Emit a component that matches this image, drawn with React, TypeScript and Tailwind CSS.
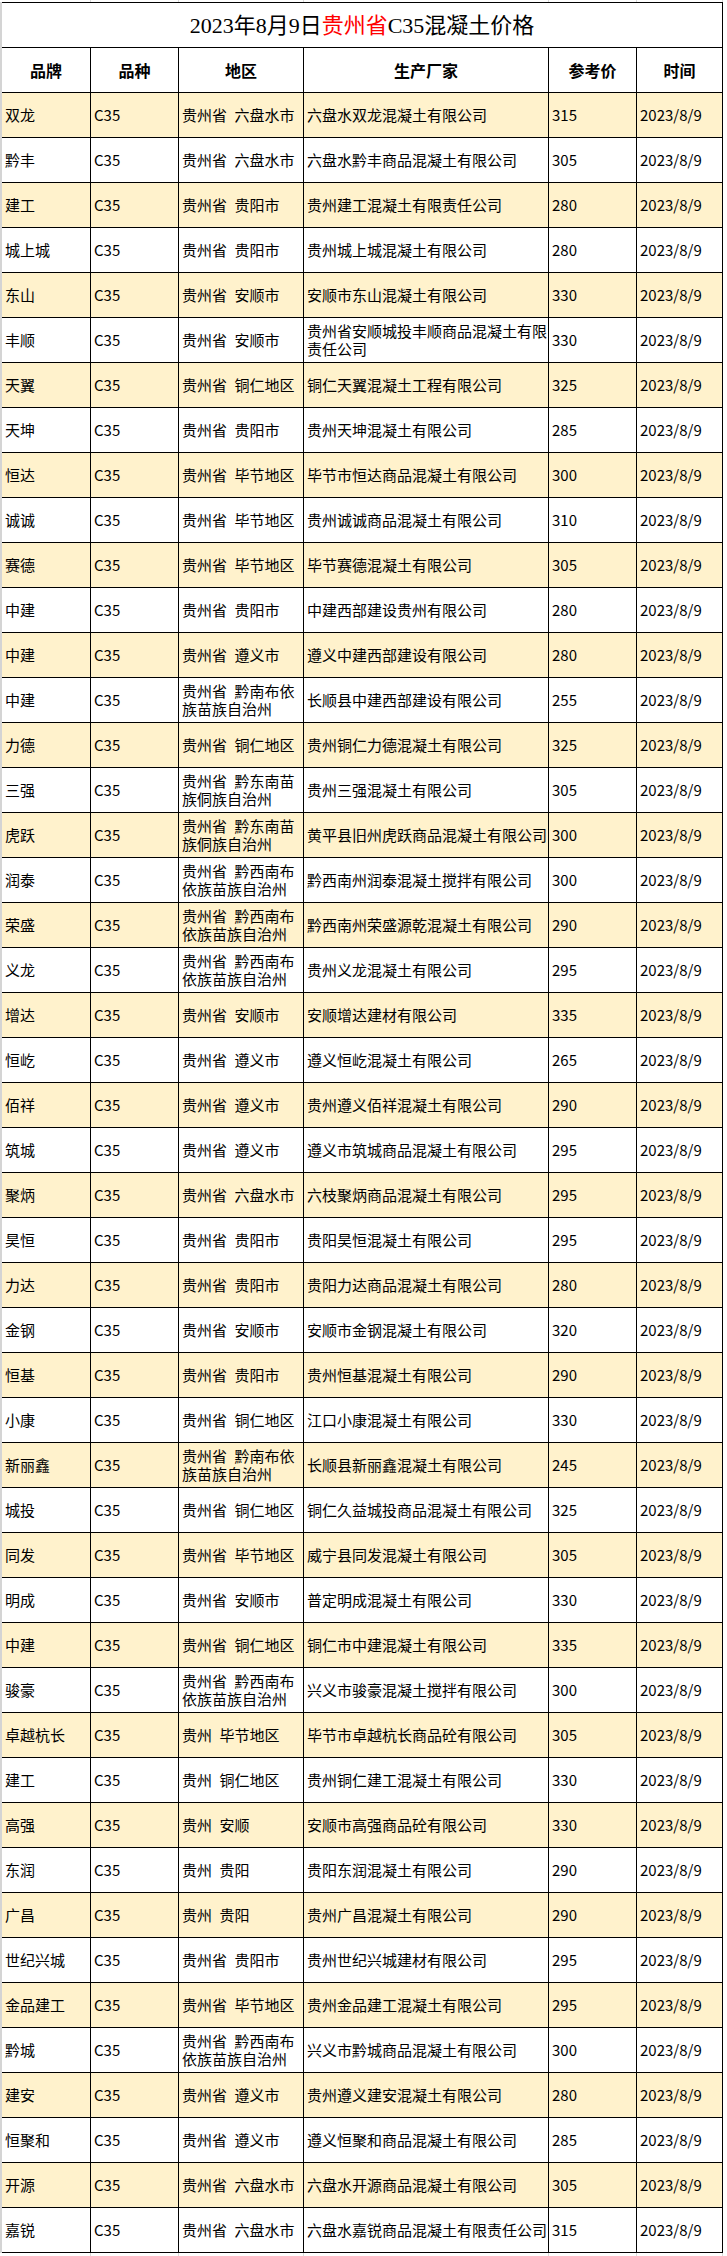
import React from "react";

type Fila = {
  marca: string;
  region: string[];
  fabrica: string[];
  precio: number;
};

// 区域/厂家里的换行按截图手动拆分
const filas: Fila[] = [
  { marca: "双龙", region: ["贵州省 六盘水市"], fabrica: ["六盘水双龙混凝土有限公司"], precio: 315 },
  { marca: "黔丰", region: ["贵州省 六盘水市"], fabrica: ["六盘水黔丰商品混凝土有限公司"], precio: 305 },
  { marca: "建工", region: ["贵州省 贵阳市"], fabrica: ["贵州建工混凝土有限责任公司"], precio: 280 },
  { marca: "城上城", region: ["贵州省 贵阳市"], fabrica: ["贵州城上城混凝土有限公司"], precio: 280 },
  { marca: "东山", region: ["贵州省 安顺市"], fabrica: ["安顺市东山混凝土有限公司"], precio: 330 },
  { marca: "丰顺", region: ["贵州省 安顺市"], fabrica: ["贵州省安顺城投丰顺商品混凝土有限", "责任公司"], precio: 330 },
  { marca: "天翼", region: ["贵州省 铜仁地区"], fabrica: ["铜仁天翼混凝土工程有限公司"], precio: 325 },
  { marca: "天坤", region: ["贵州省 贵阳市"], fabrica: ["贵州天坤混凝土有限公司"], precio: 285 },
  { marca: "恒达", region: ["贵州省 毕节地区"], fabrica: ["毕节市恒达商品混凝土有限公司"], precio: 300 },
  { marca: "诚诚", region: ["贵州省 毕节地区"], fabrica: ["贵州诚诚商品混凝土有限公司"], precio: 310 },
  { marca: "赛德", region: ["贵州省 毕节地区"], fabrica: ["毕节赛德混凝土有限公司"], precio: 305 },
  { marca: "中建", region: ["贵州省 贵阳市"], fabrica: ["中建西部建设贵州有限公司"], precio: 280 },
  { marca: "中建", region: ["贵州省 遵义市"], fabrica: ["遵义中建西部建设有限公司"], precio: 280 },
  { marca: "中建", region: ["贵州省 黔南布依", "族苗族自治州"], fabrica: ["长顺县中建西部建设有限公司"], precio: 255 },
  { marca: "力德", region: ["贵州省 铜仁地区"], fabrica: ["贵州铜仁力德混凝土有限公司"], precio: 325 },
  { marca: "三强", region: ["贵州省 黔东南苗", "族侗族自治州"], fabrica: ["贵州三强混凝土有限公司"], precio: 305 },
  { marca: "虎跃", region: ["贵州省 黔东南苗", "族侗族自治州"], fabrica: ["黄平县旧州虎跃商品混凝土有限公司"], precio: 300 },
  { marca: "润泰", region: ["贵州省 黔西南布", "依族苗族自治州"], fabrica: ["黔西南州润泰混凝土搅拌有限公司"], precio: 300 },
  { marca: "荣盛", region: ["贵州省 黔西南布", "依族苗族自治州"], fabrica: ["黔西南州荣盛源乾混凝土有限公司"], precio: 290 },
  { marca: "义龙", region: ["贵州省 黔西南布", "依族苗族自治州"], fabrica: ["贵州义龙混凝土有限公司"], precio: 295 },
  { marca: "增达", region: ["贵州省 安顺市"], fabrica: ["安顺增达建材有限公司"], precio: 335 },
  { marca: "恒屹", region: ["贵州省 遵义市"], fabrica: ["遵义恒屹混凝土有限公司"], precio: 265 },
  { marca: "佰祥", region: ["贵州省 遵义市"], fabrica: ["贵州遵义佰祥混凝土有限公司"], precio: 290 },
  { marca: "筑城", region: ["贵州省 遵义市"], fabrica: ["遵义市筑城商品混凝土有限公司"], precio: 295 },
  { marca: "聚炳", region: ["贵州省 六盘水市"], fabrica: ["六枝聚炳商品混凝土有限公司"], precio: 295 },
  { marca: "昊恒", region: ["贵州省 贵阳市"], fabrica: ["贵阳昊恒混凝土有限公司"], precio: 295 },
  { marca: "力达", region: ["贵州省 贵阳市"], fabrica: ["贵阳力达商品混凝土有限公司"], precio: 280 },
  { marca: "金钢", region: ["贵州省 安顺市"], fabrica: ["安顺市金钢混凝土有限公司"], precio: 320 },
  { marca: "恒基", region: ["贵州省 贵阳市"], fabrica: ["贵州恒基混凝土有限公司"], precio: 290 },
  { marca: "小康", region: ["贵州省 铜仁地区"], fabrica: ["江口小康混凝土有限公司"], precio: 330 },
  { marca: "新丽鑫", region: ["贵州省 黔南布依", "族苗族自治州"], fabrica: ["长顺县新丽鑫混凝土有限公司"], precio: 245 },
  { marca: "城投", region: ["贵州省 铜仁地区"], fabrica: ["铜仁久益城投商品混凝土有限公司"], precio: 325 },
  { marca: "同发", region: ["贵州省 毕节地区"], fabrica: ["威宁县同发混凝土有限公司"], precio: 305 },
  { marca: "明成", region: ["贵州省 安顺市"], fabrica: ["普定明成混凝土有限公司"], precio: 330 },
  { marca: "中建", region: ["贵州省 铜仁地区"], fabrica: ["铜仁市中建混凝土有限公司"], precio: 335 },
  { marca: "骏豪", region: ["贵州省 黔西南布", "依族苗族自治州"], fabrica: ["兴义市骏豪混凝土搅拌有限公司"], precio: 300 },
  { marca: "卓越杭长", region: ["贵州 毕节地区"], fabrica: ["毕节市卓越杭长商品砼有限公司"], precio: 305 },
  { marca: "建工", region: ["贵州 铜仁地区"], fabrica: ["贵州铜仁建工混凝土有限公司"], precio: 330 },
  { marca: "高强", region: ["贵州 安顺"], fabrica: ["安顺市高强商品砼有限公司"], precio: 330 },
  { marca: "东润", region: ["贵州 贵阳"], fabrica: ["贵阳东润混凝土有限公司"], precio: 290 },
  { marca: "广昌", region: ["贵州 贵阳"], fabrica: ["贵州广昌混凝土有限公司"], precio: 290 },
  { marca: "世纪兴城", region: ["贵州省 贵阳市"], fabrica: ["贵州世纪兴城建材有限公司"], precio: 295 },
  { marca: "金品建工", region: ["贵州省 毕节地区"], fabrica: ["贵州金品建工混凝土有限公司"], precio: 295 },
  { marca: "黔城", region: ["贵州省 黔西南布", "依族苗族自治州"], fabrica: ["兴义市黔城商品混凝土有限公司"], precio: 300 },
  { marca: "建安", region: ["贵州省 遵义市"], fabrica: ["贵州遵义建安混凝土有限公司"], precio: 280 },
  { marca: "恒聚和", region: ["贵州省 遵义市"], fabrica: ["遵义恒聚和商品混凝土有限公司"], precio: 285 },
  { marca: "开源", region: ["贵州省 六盘水市"], fabrica: ["六盘水开源商品混凝土有限公司"], precio: 305 },
  { marca: "嘉锐", region: ["贵州省 六盘水市"], fabrica: ["六盘水嘉锐商品混凝土有限责任公司"], precio: 315 },
];

const columnas = ["品牌", "品种", "地区", "生产厂家", "参考价", "时间"];

const gridCols = "grid grid-cols-[89px_88px_125px_245px_88px_86px]";

function Lineas({ lineas }: { lineas: string[] }) {
  return (
    <div className="flex flex-col leading-[18px]">
      {lineas.map((l, i) => (
        <span key={i} className="whitespace-pre">
          {l.replace(" ", "\u2002")}
        </span>
      ))}
    </div>
  );
}

function Celda({ children, bg }: { children: React.ReactNode; bg: string }) {
  return (
    <div className={`h-[45px] flex items-center pl-[3px] border-r border-b border-black overflow-hidden ${bg}`}>
      {children}
    </div>
  );
}

export default function App() {
  return (
    <div
      className="w-[727px] bg-white text-black text-[15px]"
      style={{ fontFamily: '"Noto Sans CJK SC", "Liberation Sans", sans-serif' }}
    >
      {/* 顶部网格线 */}
      <div className={`${gridCols} h-[2px] ml-[2px]`}>
        {columnas.map((c) => (
          <div key={c} className="border-r border-[#d9d9d9]" />
        ))}
      </div>

      <div className="flex">
        <div className="w-[2px] bg-[#d4d4d4]" />
        <div className={gridCols}>
          {/* 标题 */}
          <div
            className="col-span-6 h-[46px] border-t border-r border-b border-black flex items-center justify-center text-[22px]"
            style={{ fontFamily: '"Liberation Serif", "Noto Sans CJK SC", serif' }}
          >
            2023年8月9日<span className="text-[#ff0000]">贵州省</span>C35混凝土价格
          </div>

          {/* 表头 */}
          {columnas.map((c) => (
            <div
              key={c}
              className="h-[45px] flex items-center justify-center border-r border-b border-black font-bold text-[16px]"
            >
              {c}
            </div>
          ))}

          {filas.map((f, i) => {
            const bg = i % 2 === 0 ? "bg-[#fff2cc]" : "bg-white";
            return (
              <React.Fragment key={i}>
                <Celda bg={bg}>{f.marca}</Celda>
                <Celda bg={bg}>C35</Celda>
                <Celda bg={bg}>
                  <Lineas lineas={f.region} />
                </Celda>
                <Celda bg={bg}>
                  <Lineas lineas={f.fabrica} />
                </Celda>
                <Celda bg={bg}>{f.precio}</Celda>
                <Celda bg={bg}>2023/8/9</Celda>
              </React.Fragment>
            );
          })}
        </div>
      </div>

      {/* 底部网格线 */}
      <div className={`${gridCols} h-[4px] ml-[2px]`}>
        {columnas.map((c) => (
          <div key={c} className="border-r border-[#d9d9d9]" />
        ))}
      </div>
    </div>
  );
}
